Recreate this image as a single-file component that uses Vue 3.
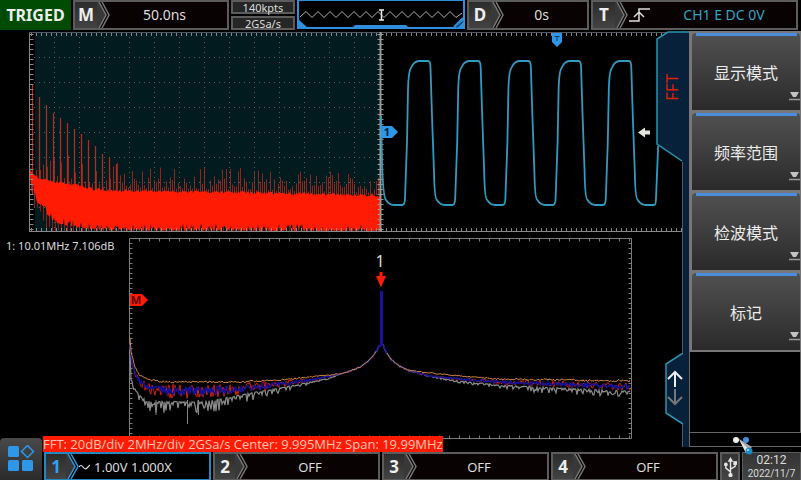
<script setup>
// Deterministic noise so the traces look the same on each load
function makeRandom(seed) {
  let s = seed
  return () => {
    s = (s * 1664525 + 1013904223) % 4294967296
    return s / 4294967296
  }
}

function interp(points, x) {
  if (x <= points[0][0]) return points[0][1]
  for (let i = 1; i < points.length; i++) {
    const [x1, y1] = points[i]
    const [x0, y0] = points[i - 1]
    if (x <= x1) return y0 + ((y1 - y0) * (x - x0)) / (x1 - x0)
  }
  return points[points.length - 1][1]
}

function range(from, to, step) {
  const out = []
  for (let v = from; v <= to; v += step) out.push(v)
  return out
}

const gridX = range(54.5, 379, 25)
const gridY = range(57.5, 230, 25)

// Full-span spectrum
const specTop = [[30, 168], [33, 173], [40, 178], [54, 181], [75, 184], [90, 188], [110, 190], [200, 191], [380, 195]]
const specBottom = [[30, 180], [33, 186], [36, 200], [44, 208], [50, 218], [58, 222], [70, 225], [90, 228], [130, 229], [380, 230]]
const rndA = makeRandom(7)
const upper = []
const lower = []
for (let x = 30; x <= 380; x++) {
  upper.push(`${x},${(interp(specTop, x) + rndA() * 3 - 1).toFixed(1)}`)
  const drop = rndA() > 0.7 ? -6 * rndA() : 2 * rndA()
  lower.unshift(`${x},${Math.min(231, interp(specBottom, x) + drop).toFixed(1)}`)
}
const specBody = [...upper, ...lower].join(' ')

const rndB = makeRandom(23)
const harmonics = [[32.5, 85], [39.5, 97], [46.5, 105], [53.5, 113], [60.5, 118], [67.5, 123], [74.5, 129], [81.5, 134], [88.5, 140], [95.5, 146], [102.5, 154], [109.5, 158], [116.5, 164]]
const harmonicPath = harmonics.map(([x, y]) => `M${x} ${y}V195`).join('')
let spikes = ''
for (let x = 36.5; x < 379; x += x < 118 ? 3.5 : 2) {
  const reach = x < 118 ? 30 : 22
  const y = interp(specTop, x) - 2 - Math.pow(rndB(), 1.6) * reach
  spikes += `M${Math.floor(x) + 0.5} ${y.toFixed(1)}V195`
}
let roots = ''
for (let x = 31.5; x < 379; x += 3) {
  const y = interp(specBottom, x)
  roots += `M${x} ${(y - 8 * rndB()).toFixed(1)}V${Math.min(231, y + 6 + 10 * rndB()).toFixed(1)}`
}

// Channel 1 square wave
let wave = 'M381 116L382 160Q383 198 386 200Q389 205 394 205'
for (let n = 0; n < 5; n++) {
  const o = 404 + n * 50.2
  wave += `L${o - 2} 205Q${o + 1} 205 ${o + 1} 198L${o + 3} 142L${o + 4} 90Q${o + 4.5} 71 ${o + 7} 68Q${o + 10} 61 ${o + 15} 61`
  wave += `L${o + 24} 61Q${o + 26.5} 61 ${o + 26.5} 68L${o + 28} 116L${o + 30} 172Q${o + 30.5} 199 ${o + 33} 200Q${o + 36} 205 ${o + 41} 205`
}
wave += 'L654 205Q656 205 656 198L658 150V146'

// Zoomed spectrum traces
function trace(points, noise, seed, shape) {
  const rnd = makeRandom(seed)
  let d = ''
  for (let x = 130; x <= 630; x++) {
    const amp = interp(noise, x)
    const k = shape === 'down' ? Math.pow(rnd(), 2.5) * 2 : rnd() * 2 - 1
    d += `${d ? 'L' : 'M'}${x} ${(interp(points, x) + k * amp).toFixed(1)}`
  }
  return d
}
const skirtL = [[340, 374], [350, 371], [360, 367], [367, 362], [373, 356], [377, 350], [379, 346], [381, 345]]
const skirtR = [[383, 345], [386, 352], [391, 359], [398, 365], [408, 370]]
const maxHold = trace(
  [[130, 338], [131, 352], [135, 367], [139, 375], [150, 380], [165, 382], [240, 382], [280, 380], [310, 377], ...skirtL, ...skirtR, [430, 373], [460, 376], [500, 379], [560, 380], [630, 381]],
  [[130, 1], [280, 1], [330, 0.5], [450, 0.5], [540, 1], [630, 1.3]], 11)
const avgPts = [[130, 345], [132, 364], [136, 376], [142, 384], [152, 389], [165, 391], [200, 391], [240, 389], [280, 384], [310, 380], [330, 376], ...skirtL, ...skirtR, [430, 376], [460, 379], [500, 382], [560, 384], [630, 387]]
const avgNoise = [[130, 1], [145, 5], [170, 8], [220, 7], [260, 5], [300, 2], [340, 0.4], [430, 0.6], [500, 2.5], [630, 4]]
const live = trace(avgPts, avgNoise, 31)
const average = trace(avgPts, avgNoise.map(([x, a]) => [x, a * 0.55]), 97)
const minHold = trace(
  [[130, 350], [131, 378], [134, 387], [139, 395], [147, 401], [200, 402], [220, 399], [250, 393], [280, 388], [310, 382], [330, 378], ...skirtL, ...skirtR, [430, 376], [460, 381], [500, 385], [560, 388], [630, 391]],
  [[130, 2], [155, 6], [200, 6], [235, 6], [270, 3], [310, 1], [340, 0.3], [450, 0.8], [540, 3], [630, 3]], 5, 'down')

const menu = ['显示模式', '频率范围', '检波模式', '标记']
const channels = [
  { id: 1, text: '1.00V 1.000X', on: true },
  { id: 2, text: 'OFF' },
  { id: 3, text: 'OFF' },
  { id: 4, text: 'OFF' },
]
</script>

<template>
  <div class="scope">
    <header class="topbar">
      <div class="status">TRIGED</div>
      <button class="module">
        <span class="tag">M</span>
        <svg class="chevron" viewBox="0 0 13 26" preserveAspectRatio="none"><path class="face" d="M0 0H2L9 13L2 26H0Z" /><path class="edge" d="M2 0L9 13L2 26M5 0L12 13L5 26" /></svg>
        <span class="value">50.0ns</span>
      </button>
      <div class="rates">
        <span>140kpts</span>
        <span>2GSa/s</span>
      </div>
      <svg class="memory" viewBox="0 0 168 29" preserveAspectRatio="none">
        <rect width="168" height="29" fill="#2f8fdf" />
        <path d="M2 1H166V19L159 27H111L109 25H58L56 27H10L2 20Z" fill="#000" />
        <path d="M157 27L166 18" stroke="#2f8fdf" stroke-width="2" />
        <path d="M160 27.500L166 21.500" stroke="#000" />
        <path d="M3 17L9 11.500L15 17.500L21 11.500L27 17.500L33 11.500L39 17.500L45 11.500L51 17.500L57 11.500L63 17.500L69 11.500L75 17.500L81 11.500L87 17.500L93 11.500L99 17.500L105 11.500L111 17.500L117 11.500L123 17.500L129 11.500L135 17.500L141 11.500L147 17.500L153 11.500L159 17.500L165 13" fill="none" stroke="#b4b4b4" stroke-width="1" />
        <path d="M82 10H87M82 20H87M84.500 10V20" stroke="#eee" stroke-width="1.500" />
      </svg>
      <button class="module">
        <span class="tag">D</span>
        <svg class="chevron" viewBox="0 0 13 26" preserveAspectRatio="none"><path class="face" d="M0 0H2L9 13L2 26H0Z" /><path class="edge" d="M2 0L9 13L2 26M5 0L12 13L5 26" /></svg>
        <span class="value">0s</span>
      </button>
      <button class="module">
        <span class="tag">T</span>
        <svg class="chevron" viewBox="0 0 13 26" preserveAspectRatio="none"><path class="face" d="M0 0H2L9 13L2 26H0Z" /><path class="edge" d="M2 0L9 13L2 26M5 0L12 13L5 26" /></svg>
        <svg class="slope" viewBox="0 0 24 16"><path d="M1 14H11V2H22M6 10L11 5L16 10" fill="none" stroke="#ddd" stroke-width="1.500" /></svg>
        <span class="value source">CH1 E DC 0V</span>
      </button>
    </header>

    <main class="body">
      <section class="screens">
        <svg class="time" viewBox="29 32 653 200">
          <rect x="35" y="32" width="345" height="200" fill="#021b1e" />
          <path :d="spikes" stroke="#92241c" fill="none" />
          <path :d="harmonicPath" stroke="#b02c22" stroke-width="1.300" fill="none" />
          <path :d="roots" stroke="#8c2019" fill="none" />
          <g stroke="#4a6465" stroke-width="1" stroke-dasharray="1 4">
            <path v-for="x in gridX" :key="'x' + x" :d="`M${x} 32V231`" />
            <path v-for="y in gridY" :key="'y' + y" :d="`M29 ${y}H380`" />
          </g>
          <polygon :points="specBody" fill="#ff1b04" />
          <g fill="none" stroke="#888">
            <path d="M29.500 32V232M29 231.500H682" />
            <path d="M29 32.500H682" stroke="#556" />
            <path d="M31 34.500H682M31 229.500H682" stroke-width="3" stroke-dasharray="1 4" />
            <path d="M31.500 34V231" stroke-width="4" stroke-dasharray="1 4" />
            <path d="M380.500 32V232" stroke="#999" stroke-width="2" />
            <path d="M380.500 34V231" stroke="#999" stroke-width="6" stroke-dasharray="1 4" />
          </g>
          <path :d="wave" fill="none" stroke="#329abf" stroke-width="1.800" />
          <path d="M381 126H392L398 132L392 138H381Z" fill="#2f96e8" />
          <text x="387" y="136" class="mark">1</text>
          <path d="M552 33H562V42L557 47L552 42Z" fill="#2f96e8" />
          <path d="M554.500 36.500H559.500M557 36V41" stroke="#1b3950" />
          <path d="M638 132.500L645 127.500V130.500H650V134.500H645V137.500Z" fill="#e6e6e0" />
        </svg>

        <div class="zoomed">
          <p class="readout">1: 10.01MHz 7.106dB</p>
          <svg class="freq" viewBox="129 238 503 201">
            <g fill="none" stroke="#7c7c7c">
              <path d="M129.500 238.500H631.500V438.500H129.500Z" />
              <path d="M139 240H631M139 437H631" stroke-width="3" stroke-dasharray="1 9" />
              <path d="M131 243V438M630 243V438" stroke-width="3" stroke-dasharray="1 4" />
            </g>
            <path :d="minHold" fill="none" stroke="#8c8c8c" stroke-width="1.200" />
            <path d="M187.500 400V424M156 400V415M198.500 400V415" stroke="#858585" />
            <path :d="live" fill="none" stroke="#d4200d" />
            <path :d="average" fill="none" stroke="#10109a" stroke-width="1.500" />
            <path :d="maxHold" fill="none" stroke="#c9803f" />
            <path d="M376 351L379.500 345.500H383L387 353" fill="none" stroke="#14149c" stroke-width="1.500" />
            <path d="M381.500 291V346" stroke="#14149c" stroke-width="3" />
            <path d="M379.500 272V276H376L381 287.500L386 276H382.500V272Z" fill="#ff1b04" />
            <text x="380" y="267" class="peak">1</text>
            <path d="M130 294H142L148 300L142 306H130Z" fill="#ff1b04" />
            <text x="136" y="304" class="mark math">M</text>
          </svg>
        </div>

        <p class="banner">FFT: 20dB/div 2MHz/div 2GSa/s Center: 9.995MHz Span: 19.99MHz</p>
      </section>

      <aside class="side">
        <svg class="fft-tab" viewBox="0 0 33 131">
          <path d="M1 8L12 1H33V131H26L1 113Z" fill="#08213a" />
          <path d="M33 1H12L1 8V113L26 130" fill="none" stroke="#2c93ad" stroke-width="1.500" />
          <text transform="translate(22 70) rotate(-90)" class="fft-label">FFT</text>
        </svg>
        <button class="pager" aria-label="Page up or down">
          <svg viewBox="0 0 18 72">
            <path d="M18 0L1 11V60L18 71Z" fill="#08213a" />
            <path d="M18 0L1 11V60L18 71" fill="none" stroke="#2c93ad" stroke-width="1.500" />
          </svg>
          <svg class="arrows" viewBox="0 0 18 36">
            <path d="M9 17V2M2 9L9 2L16 9" fill="none" stroke="#eee" stroke-width="2" />
            <path d="M9 19V34M2 27L9 34L16 27" fill="none" stroke="#777" stroke-width="2" />
          </svg>
        </button>
        <div class="strip"></div>
        <div class="panel">
          <nav class="menu">
            <button v-for="item in menu" :key="item" class="item">
              {{ item }}
              <svg class="more" viewBox="0 0 11 9"><path d="M1 0H10L7 5H4Z" fill="#c4c4c4" /><path d="M0 7.500H11" stroke="#999" stroke-width="1.500" /></svg>
            </button>
          </nav>
          <div class="blank"></div>
          <div class="pages"><i class="dot current"></i><i class="dot"></i></div>
        </div>
        <svg class="pointer" viewBox="0 0 16 18">
          <path d="M1 1L14 9L8 15Z" fill="#aaa" />
          <path d="M1 1L11 12L8 15Z" fill="#e4e4e4" />
          <circle cx="11" cy="13" r="3.500" fill="#188bc8" />
          <circle cx="10" cy="12" r="1" fill="#bdeaff" />
        </svg>
      </aside>
    </main>

    <footer class="bottombar">
      <button class="home" aria-label="Home">
        <svg viewBox="0 0 28 28">
          <g fill="#2f96e8">
            <rect x="1" y="1" width="11" height="11" rx="1.500" />
            <rect x="1" y="15" width="11" height="11" rx="1.500" />
            <rect x="15" y="15" width="11" height="11" rx="1.500" />
          </g>
          <path d="M20.500 0.500L26.500 6.500L20.500 12.500L14.500 6.500Z" fill="none" stroke="#2f96e8" stroke-width="1.500" />
        </svg>
      </button>
      <button v-for="c in channels" :key="c.id" class="module channel" :class="{ on: c.on }">
        <span class="tag">{{ c.id }}</span>
        <svg class="chevron" viewBox="0 0 13 26" preserveAspectRatio="none"><path class="face" d="M0 0H2L9 13L2 26H0Z" /><path class="edge" d="M2 0L9 13L2 26M5 0L12 13L5 26" /></svg>
        <svg v-if="c.on" class="coupling" viewBox="0 0 11 6"><path d="M0 3Q2 0 4 3T8 4L11 1" fill="none" stroke="#ddd" stroke-width="1.200" /></svg>
        <span class="value">{{ c.text }}</span>
      </button>
      <div class="usb">
        <svg viewBox="0 0 14 22">
          <path d="M7 3V19M7 16L2 12V8M7 13L12 10V7" fill="none" stroke="#e6e6e6" stroke-width="1.500" />
          <path d="M7 0L10 5H4Z" fill="#e6e6e6" />
          <circle cx="7" cy="19.500" r="2.300" fill="#e6e6e6" />
          <circle cx="2" cy="8" r="2" fill="#e6e6e6" />
          <rect x="10" y="4.500" width="4" height="4" fill="#e6e6e6" />
        </svg>
      </div>
      <div class="clock">
        <time>02:12</time>
        <time class="date">2022/11/7</time>
      </div>
    </footer>
  </div>
</template>

<style>
body {
  background: #000;
}
</style>

<style scoped>
.scope {
  display: flex;
  flex-direction: column;
  min-height: 100vh;
  background: #000;
  color: #dcdcdc;
  font-family: "Noto Sans", "Noto Sans CJK SC", sans-serif;
  font-size: 13px;
  overflow: hidden;
}
.scope * {
  box-sizing: border-box;
}
button {
  margin: 0;
  padding: 0;
  border: 0;
  background: none;
  color: inherit;
  font: inherit;
}
p {
  margin: 0;
}
svg {
  display: block;
}

.topbar {
  display: grid;
  grid-template-columns: 71fr 156fr 64fr 168fr 122fr 207fr;
  gap: 2px;
  height: 30px;
  padding: 0 3px 1px 0;
}
.status {
  display: flex;
  align-items: center;
  justify-content: center;
  background: #004b03;
  color: #eee;
  font-size: 16px;
  font-weight: 700;
}
.module {
  display: flex;
  align-items: stretch;
  min-width: 0;
  border: 2px solid #5c5c5c;
  background: #080202;
}
.tag {
  display: flex;
  align-items: center;
  justify-content: center;
  flex: 0 0 22px;
  background: linear-gradient(#2c2c2c, #434343);
  color: #eee;
  font-size: 17px;
  font-weight: 700;
  line-height: 22px;
}
.chevron {
  flex: 0 0 13px;
  width: 13px;
  height: 100%;
}
.face {
  fill: #383838;
}
.edge {
  fill: none;
  stroke: #777;
  stroke-width: 1.5;
}
.value {
  flex: 1;
  align-self: center;
  padding-right: 8px;
  text-align: center;
  font-size: 14px;
  line-height: 18px;
  white-space: nowrap;
}
.source {
  padding-right: 0;
  color: #35a3c4;
}
.slope {
  flex: 0 0 24px;
  width: 24px;
  align-self: center;
}
.rates {
  display: grid;
  grid-template-rows: 1fr 1fr;
  gap: 2px;
}
.rates span {
  display: flex;
  align-items: center;
  justify-content: center;
  border: 2px solid #5c5c5c;
  background: #262626;
  font-size: 11px;
  line-height: 9px;
}
.memory {
  width: 100%;
  height: 29px;
}

.body {
  display: flex;
  flex: 1;
}
.screens {
  flex: 682;
  min-width: 0;
  padding-top: 2px;
}
.time {
  width: calc(100% - 29px);
  margin-left: 29px;
}
.zoomed {
  display: grid;
  grid-template-columns: 129fr 503fr 50fr;
  margin-top: 6px;
}
.readout {
  padding-left: 6px;
  font-size: 11px;
  line-height: 16px;
  white-space: nowrap;
}
.freq {
  width: 100%;
}
.mark {
  fill: #04243f;
  font-size: 11px;
  font-weight: 700;
  text-anchor: middle;
}
.math {
  fill: #5b0800;
}
.peak {
  fill: #dcdcdc;
  font-size: 16px;
  text-anchor: middle;
}
.banner {
  position: relative;
  width: max-content;
  margin: -3px 0 0 43px;
  background: #ff1b04;
  color: #ffc4b4;
  font-family: "Open Sans", "Noto Sans", sans-serif;
  font-size: 13px;
  line-height: 16px;
}

.side {
  position: relative;
  display: flex;
  flex: 0 0 119px;
  padding: 1px 0 5px;
}
.fft-tab {
  position: absolute;
  top: 1px;
  left: -26px;
  width: 33px;
}
.fft-label {
  fill: #d8200c;
  font-size: 17px;
}
.pager {
  position: absolute;
  top: 323px;
  left: -17px;
  width: 18px;
}
.arrows {
  position: absolute;
  top: 17px;
  left: 1px;
  width: 18px;
}
.strip {
  flex: 0 0 7px;
  border-left: 1px solid #556;
  background: #08213a;
}
.panel {
  display: flex;
  flex: 1;
  flex-direction: column;
}
.menu {
  display: grid;
  gap: 3px;
  padding: 2px 1px 2px 3px;
  background: #77777a;
}
.item {
  position: relative;
  height: 77px;
  border-radius: 4px 4px 0 0;
  background: linear-gradient(#4a8edb, #4a8edb) center top / 101px 3px no-repeat, linear-gradient(#515151, #2a2a2a);
  color: #ececec;
  font-size: 16px;
}
.more {
  position: absolute;
  right: 0;
  bottom: 9px;
  width: 11px;
}
.blank {
  flex: 1;
  border: 1px solid #666;
  border-top: 0;
}
.pages {
  display: flex;
  align-items: center;
  justify-content: center;
  gap: 4px;
  height: 14px;
  border: solid #666;
  border-width: 0 0 1px 1px;
  padding-right: 10px;
}
.dot {
  width: 6px;
  height: 6px;
  border-radius: 50%;
  background: #4690da;
}
.current {
  background: #eee;
}
.pointer {
  position: absolute;
  right: 47px;
  bottom: -4px;
  z-index: 2;
  width: 16px;
}

.bottombar {
  display: grid;
  grid-template-columns: 42fr repeat(4, 167fr) 20fr 59fr;
  gap: 2px;
  align-items: end;
  margin-top: -14px;
}
.home {
  display: flex;
  align-items: center;
  justify-content: center;
  height: 42px;
  border-radius: 4px 4px 0 0;
  background: linear-gradient(#494949, #2b2b2b);
}
.home svg {
  width: 28px;
}
.channel {
  height: 28px;
  border-bottom-width: 1px;
}
.channel .tag {
  flex-basis: 20px;
}
.channel .value {
  padding-right: 6px;
  font-size: 13px;
}
.on {
  border-color: #2388bd;
  background: #000;
}
.on .tag {
  color: #35a0ee;
}
.on .edge {
  stroke: #2f96d8;
}
.coupling {
  flex: 0 0 11px;
  align-self: center;
  width: 11px;
}
.on .value {
  padding-left: 4px;
  text-align: left;
}
.usb,
.clock {
  display: flex;
  align-items: center;
  justify-content: center;
  height: 28px;
  border: 2px solid #5c5c5c;
  border-bottom: 0;
  background: linear-gradient(#333, #444);
}
.usb svg {
  width: 13px;
}
.clock {
  flex-direction: column;
  border-width: 1px;
  font-family: Roboto, sans-serif;
  font-size: 12px;
  line-height: 14px;
}
.date {
  font-size: 10px;
  line-height: 13px;
}
</style>
